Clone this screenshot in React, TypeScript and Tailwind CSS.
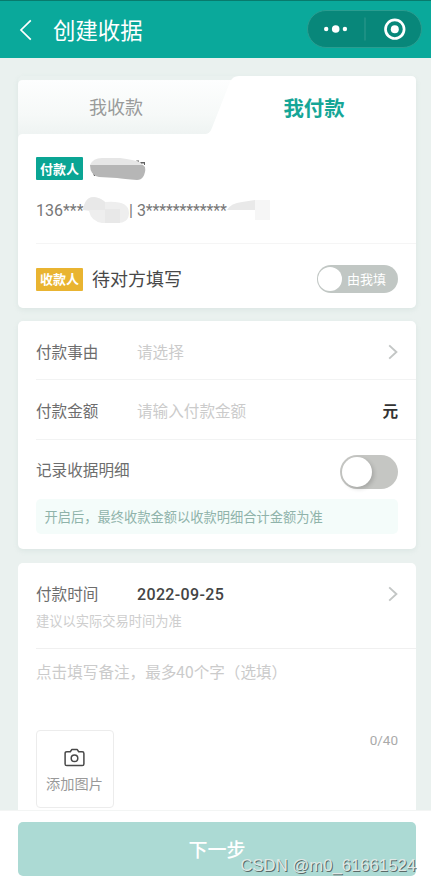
import { useState } from 'react';
import type { ReactNode } from 'react';

function ChevronRight() {
    return (
        <svg className="h-[16px] w-[10px] shrink-0" viewBox="0 0 10 16" fill="none" stroke="#c3c6c5" strokeWidth="1.9">
            <path d="M1.2 1.4 L8.4 8 L1.2 14.6" />
        </svg>
    );
}

function Badge({ className, children }: { className: string; children: ReactNode }) {
    return (
        <span className={`flex h-[23px] w-[47px] shrink-0 items-center justify-center rounded-[1px] text-[13px] font-bold text-white ${className}`}>
            {children}
        </span>
    );
}

function Header() {
    return (
        <header className="flex h-[58px] shrink-0 items-center border-t border-[#087b6d] bg-[#0aa99b] text-white">
            <svg className="ml-[19px] h-[22px] w-[13px]" viewBox="0 0 13 22" fill="none" stroke="white" strokeWidth="1.7">
                <path d="M11.8 1.3 L2 11 L11.8 20.7" />
            </svg>
            <h1 className="relative -top-px ml-[21px] text-[22.4px] leading-[30px]">创建收据</h1>
            <div className="relative -top-px ml-auto mr-[9px] flex h-[38px] w-[115px] items-center rounded-full border border-[#2a9d90] bg-[#08877a]">
                <svg className="h-[36px] w-full" viewBox="0 0 113 36" fill="none">
                    <circle cx="18.2" cy="18" r="2.2" fill="white" />
                    <circle cx="27.7" cy="18" r="3.8" fill="white" />
                    <circle cx="36.9" cy="18" r="2.2" fill="white" />
                    <path d="M57 6.5 V29.5" stroke="#2b978b" strokeWidth="1.2" />
                    <circle cx="86.8" cy="18.2" r="9.3" stroke="white" strokeWidth="2.7" />
                    <circle cx="86.8" cy="18.2" r="4" fill="white" />
                </svg>
            </div>
        </header>
    );
}

function Tabs() {
    return (
        <div className="relative h-[58px]">
            {/* slanted tab background */}
            <svg className="absolute inset-0 h-[63px] w-full" viewBox="0 0 398 63" preserveAspectRatio="none">
                <defs>
                    <linearGradient id="tabFade" x1="0" y1="0" x2="0" y2="1">
                        <stop offset="0" stopColor="#fdfefe" />
                        <stop offset="0.6" stopColor="#f6f9f8" />
                        <stop offset="1" stopColor="#edf2f1" />
                    </linearGradient>
                </defs>
                <path d="M0 63 V9 Q0 4 5 4 H230 V63 Z" fill="url(#tabFade)" />
                <path d="M0 63 Q0 58 5 58 H187 Q191.500 58 193.500 53 L212 6 Q214.500 0 221 0 H393 Q398 0 398 5 V63 Z" fill="white" />
            </svg>
            <div className="relative flex h-full items-center">
                <button className="w-[196px] text-[18px] leading-6 text-[#999b9a]"><span className="relative top-px">我收款</span></button>
                <button className="w-[202px] text-[20.4px] font-bold leading-6 text-[#16a697]"><span className="relative -left-px top-[2px]">我付款</span></button>
            </div>
        </div>
    );
}

function PartyCard() {
    return (
        <section className="h-[232px] rounded-[5px] shadow-[0_2px_5px_rgba(150,180,172,0.16)]">
            <Tabs />
            <div className="h-[174px] rounded-b-[5px] rounded-tl-[5px] bg-white">
                <div className="ml-[18px] h-[110px] border-b border-[#f5f5f5] pt-[23px]">
                    <div className="flex items-center">
                        <Badge className="bg-[#0aa594]">付款人</Badge>
                        <svg className="ml-[7px] h-[23px] w-[58px]" viewBox="0 0 58 23">
                            <path d="M46 3.500 H49 V5 H55 V8 H54 V6.500 H52 V8 Z M3 16 H5 V19 H4 Z" fill="#616161" />
                            <path d="M0 8 H53 L55 10 Q56 15 53 20 Q51 23 47 23 Q34 22 27 21 L9 20 Q0 18 0 8 Z" fill="#b6b6b6" />
                            <path d="M0 8 Q3 1 12 1 H30 Q44 3 50 5 L53 8 Z" fill="#e6e6e6" />
                        </svg>
                    </div>
                    <div className="mt-[17px] flex h-[28px] items-center text-[16px] text-[#777]">
                        <span className="w-[47px] whitespace-nowrap font-[Roboto]">136***</span>
                        <svg className="relative -top-px h-[28px] w-[47px]" viewBox="0 0 47 28">
                            <path d="M0 14 Q2 1 11 1 Q18 2 22 6 Q46 4 46 17 Q46 27 34 27 H19 Q8 25 6 15 Z" fill="#eeeeee" />
                            <path d="M0 14 Q2 1 11 1 Q18 2 22 6 V14 Z M22 13 H37 V27 H22 Z" fill="#e8e8e8" />
                        </svg>
                        <span className="-ml-px whitespace-nowrap font-[Roboto]">|</span>
                        <span className="ml-[4px] w-[90px] whitespace-nowrap font-[Roboto] tracking-[-0.15px]">3************</span>
                        <svg className="relative -top-[2px] h-[24px] w-[44px]" viewBox="0 0 44 24">
                            <path d="M0 13 Q4 6 15 5 L28 3 H43 V23 H28 V13 Z" fill="#e9e9e9" />
                            <path d="M28 3 H43 V23 H28 Z" fill="#f6f6f6" />
                        </svg>
                    </div>
                </div>
                <div className="flex items-center px-[18px] pt-[21px]">
                    <Badge className="bg-[#e9b431]">收款人</Badge>
                    <span className="relative -top-px ml-[9px] text-[18px] leading-[26px] text-[#484848]">待对方填写</span>
                    <button className="ml-auto flex h-[28px] w-[81px] items-center rounded-full bg-[#c1c7c4] pl-[1px] text-[13px] text-white">
                        <span className="h-[24px] w-[24px] rounded-full bg-white" />
                        <span className="ml-[5px]">由我填</span>
                    </button>
                </div>
            </div>
        </section>
    );
}

function Switch({ checked, onChange }: { checked: boolean; onChange: (v: boolean) => void }) {
    return (
        <button
            role="switch"
            aria-checked={checked}
            onClick={() => onChange(!checked)}
            className={`flex h-[34px] w-[58px] items-center rounded-full px-[2px] ${checked ? 'justify-end bg-[#0aa99b]' : 'bg-[#c5c6c3]'}`}
        >
            <span className="h-[30px] w-[30px] rounded-full bg-white shadow-[2px_2px_4px_rgba(0,0,0,0.16)]" />
        </button>
    );
}

function DetailCard() {
    const [detail, setDetail] = useState(false);

    return (
        <section className="mt-[13px] h-[228px] rounded-[5px] bg-white pl-[18px] text-[15.6px] shadow-[0_2px_5px_rgba(150,180,172,0.16)]">
            <div className="flex h-[59px] items-center border-b border-[#f2f3f3] pr-[18px] pt-[3px]">
                <span className="w-[101px] text-[#6d6d6d]">付款事由</span>
                <span className="text-[#cbcbcb]">请选择</span>
                <span className="ml-auto"><ChevronRight /></span>
            </div>
            <div className="flex h-[60px] items-center border-b border-[#f2f3f3] pr-[18px] pt-[3px]">
                <span className="w-[101px] text-[#6d6d6d]">付款金额</span>
                <span className="text-[#cbcbcb]">请输入付款金额</span>
                <span className="ml-auto font-bold text-[#333]">元</span>
            </div>
            <div className="flex items-center pr-[18px] pt-[15px]">
                <span className="relative -top-[2px] text-[#6d6d6d]">记录收据明细</span>
                <span className="ml-auto flex"><Switch checked={detail} onChange={setDetail} /></span>
            </div>
            <div className="mr-[18px] mt-[10px] flex h-[35px] items-center rounded-[5px] bg-[#f4fcfa] pl-[8.5px] text-[13.25px] text-[#8fb3aa]">
                开启后，最终收款金额以收款明细合计金额为准
            </div>
        </section>
    );
}

function RemarkCard() {
    return (
        <section className="mt-[14px] h-[260px] rounded-t-[5px] bg-white pl-[18px] text-[15.6px]">
            <div className="h-[86px] border-b border-[#f0f0f0] pt-[20px]">
                <div className="flex h-[22px] items-center pr-[18px]">
                    <span className="w-[101px] text-[#6d6d6d]">付款时间</span>
                    <span className="relative top-px font-[Roboto] text-[16px] font-medium tracking-[0.35px] text-[#444]">2022-09-25</span>
                    <span className="ml-auto"><ChevronRight /></span>
                </div>
                <p className="mt-[6px] text-[13.25px] leading-[20px] text-[#cecece]">建议以实际交易时间为准</p>
            </div>
            <p className="mt-[10px] leading-6 text-[#cbcbcb]">点击填写备注，最多40个字（选填）</p>
            <div className="mt-[47px] flex items-start justify-between pr-[18px]">
                <button className="flex h-[78px] w-[78px] flex-col items-center rounded-[4px] border border-[#ececec] pt-[17px]">
                    <svg className="relative -left-[0.5px] h-[19px] w-[21px]" viewBox="0 0 21 19" fill="none" stroke="#484848" strokeWidth="1.5" strokeLinejoin="round">
                        <path d="M2.800 3.700 H6.300 L7.900 1.400 H13.100 L14.700 3.700 H18.200 Q19.900 3.700 19.900 5.400 V15.900 Q19.900 17.600 18.200 17.600 H2.800 Q1.100 17.600 1.100 15.900 V5.400 Q1.100 3.700 2.800 3.700 Z" />
                        <circle cx="10.5" cy="10.300" r="3.300" />
                    </svg>
                    <span className="relative -left-[0.5px] mt-[6px] text-[14.2px] leading-[20px] text-[#999]">添加图片</span>
                </button>
                <span className="font-[Roboto] text-[13.5px] leading-[20px] text-[#aaa]">0/40</span>
            </div>
        </section>
    );
}

export default function App() {
    return (
        <div className="relative flex h-[883px] w-full flex-col overflow-hidden bg-[#eaf1ef] font-['Noto_Sans_CJK_SC',sans-serif]">
            <Header />
            <main className="h-[752px] shrink-0 overflow-hidden pl-[18px] pr-[15px] pt-[18px]">
                <PartyCard />
                <DetailCard />
                <RemarkCard />
            </main>
            <footer className="h-[73px] shrink-0 border-t border-[#f3f5f4] bg-white pl-[18px] pr-[15px] pt-[11px]">
                <button className="h-[54px] w-full rounded-[5px] bg-[#acdad4] text-[19px] font-medium text-white">下一步</button>
            </footer>
            <span className="absolute bottom-[7px] right-[15px] whitespace-nowrap font-['Liberation_Sans',sans-serif] text-[16.7px] leading-[20px] text-[#dfe8e6] [text-shadow:1px_1px_0_#5b6a68]">
                CSDN @m0_61661524
            </span>
        </div>
    );
}
